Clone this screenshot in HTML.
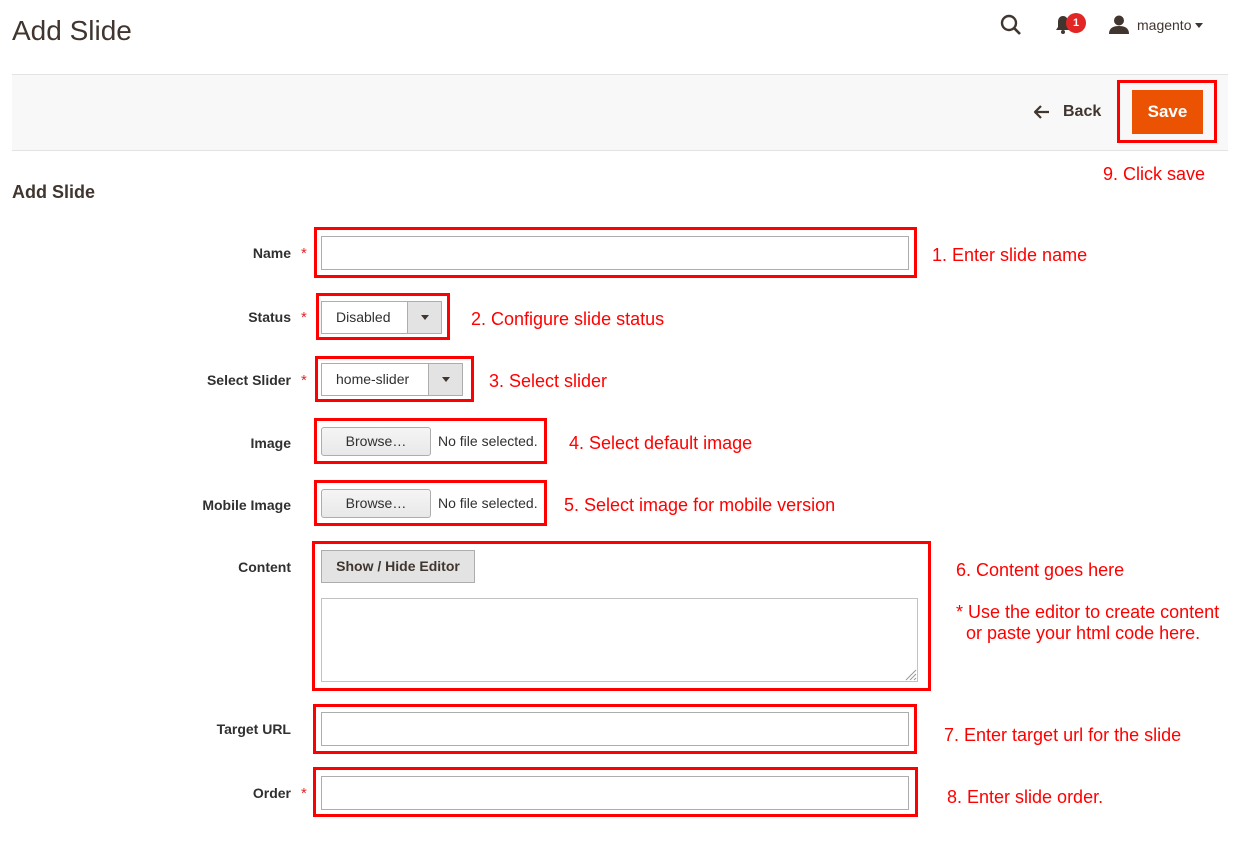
<!DOCTYPE html>
<html><head><meta charset="utf-8"><style>
*{box-sizing:border-box;margin:0;padding:0}
body{width:1240px;height:857px;background:#fff;font-family:"Liberation Sans",sans-serif;position:relative;overflow:hidden;color:#303030}
.a{position:absolute}
.rb{position:absolute;border:3px solid #f00}
.lbl{position:absolute;right:949px;font-size:14px;font-weight:bold;color:#303030;white-space:nowrap;line-height:16px}
.star{position:absolute;left:301px;color:#e22626;font-size:15px;line-height:16px}
.inp{position:absolute;border:1px solid #adadad;background:#fff}
.ann{position:absolute;color:#f00;font-size:18px;white-space:nowrap;line-height:20px}
.sel{position:absolute;border:1px solid #adadad;background:#fff;font-size:14px;color:#303030;line-height:30px;padding-left:14px}
.sel .ar{position:absolute;right:0;top:0;bottom:0;width:34px;background:#e3e3e3;border-left:1px solid #adadad}
.sel .ar:after{content:"";position:absolute;left:13px;top:13px;border-left:4px solid transparent;border-right:4px solid transparent;border-top:5px solid #41362f}
.br{position:absolute;border:1px solid #adadad;border-radius:3px;background:linear-gradient(#f5f5f5,#e8e8e8);font-size:14px;text-align:center;line-height:26px;color:#303030}
.nf{position:absolute;font-size:14px;color:#303030;line-height:16px}
</style></head><body>
<div class="a" style="left:12px;top:15px;font-size:28px;color:#41362f">Add Slide</div>
<svg class="a" style="left:1000px;top:14px" width="22" height="22" viewBox="0 0 22 22"><circle cx="9" cy="9" r="7" fill="none" stroke="#41362f" stroke-width="2.4"/><line x1="14" y1="14" x2="20" y2="20" stroke="#41362f" stroke-width="2.6"/></svg>
<svg class="a" style="left:1055px;top:15px" width="16" height="20" viewBox="0 0 16 20"><path d="M8 1C4.5 1 3 4 3 7v5l-2 3h14l-2-3V7c0-3-1.5-6-5-6z" fill="#41362f"/><circle cx="8" cy="17" r="2" fill="#41362f"/></svg>
<div class="a" style="left:1066px;top:13px;width:20px;height:20px;border-radius:50%;background:#e22626;color:#fff;font-size:11px;font-weight:bold;text-align:center;line-height:20px">1</div>
<svg class="a" style="left:1109px;top:15px" width="20" height="19" viewBox="0 0 20 19"><circle cx="10" cy="5.5" r="5" fill="#41362f"/><path d="M0 19c0-6 4-8 10-8s10 2 10 8z" fill="#41362f"/></svg>
<div class="a" style="left:1137px;top:17px;font-size:14px;color:#41362f">magento</div>
<div class="a" style="left:1195px;top:23px;border-left:4px solid transparent;border-right:4px solid transparent;border-top:5px solid #41362f"></div>
<div class="a" style="left:12px;top:74px;width:1216px;height:77px;background:#f8f8f8;border-top:1px solid #e3e3e3;border-bottom:1px solid #e3e3e3"></div>
<svg class="a" style="left:1034px;top:105px" width="15" height="14" viewBox="0 0 15 14"><path d="M7 1L1 7l6 6M1 7h14" fill="none" stroke="#41362f" stroke-width="2.2"/></svg>
<div class="a" style="left:1063px;top:103px;font-size:16px;color:#41362f;font-weight:bold">Back</div>
<div class="a" style="left:1132px;top:90px;width:71px;height:44px;background:#eb5202;color:#fff;font-size:17px;font-weight:bold;text-align:center;line-height:44px">Save</div>
<div class="rb" style="left:1117px;top:80px;width:100px;height:63px"></div>
<div class="ann" style="left:1103px;top:164px">9. Click save</div>
<div class="a" style="left:12px;top:182px;font-size:18px;font-weight:bold;color:#41362f">Add Slide</div>

<div class="lbl" style="top:245px">Name</div><div class="star" style="top:246px">*</div>
<div class="inp" style="left:321px;top:236px;width:588px;height:34px"></div>
<div class="rb" style="left:314px;top:227px;width:603px;height:51px"></div>
<div class="ann" style="left:932px;top:245px">1. Enter slide name</div>

<div class="lbl" style="top:309px">Status</div><div class="star" style="top:310px">*</div>
<div class="sel" style="left:321px;top:301px;width:121px;height:33px">Disabled<div class="ar"></div></div>
<div class="rb" style="left:316px;top:293px;width:134px;height:47px"></div>
<div class="ann" style="left:471px;top:309px">2. Configure slide status</div>

<div class="lbl" style="top:372px">Select Slider</div><div class="star" style="top:373px">*</div>
<div class="sel" style="left:321px;top:363px;width:142px;height:33px">home-slider<div class="ar"></div></div>
<div class="rb" style="left:315px;top:356px;width:159px;height:46px"></div>
<div class="ann" style="left:489px;top:371px">3. Select slider</div>

<div class="lbl" style="top:435px">Image</div>
<div class="br" style="left:321px;top:427px;width:110px;height:29px">Browse…</div>
<div class="nf" style="left:438px;top:433px">No file selected.</div>
<div class="rb" style="left:314px;top:418px;width:233px;height:46px"></div>
<div class="ann" style="left:569px;top:433px">4. Select default image</div>

<div class="lbl" style="top:497px">Mobile Image</div>
<div class="br" style="left:321px;top:489px;width:110px;height:29px">Browse…</div>
<div class="nf" style="left:438px;top:495px">No file selected.</div>
<div class="rb" style="left:314px;top:480px;width:233px;height:46px"></div>
<div class="ann" style="left:564px;top:495px">5. Select image for mobile version</div>

<div class="lbl" style="top:559px">Content</div>
<div class="a" style="left:321px;top:550px;width:154px;height:33px;background:#e3e3e3;border:1px solid #adadad;font-size:14px;font-weight:bold;color:#41362f;text-align:center;line-height:31px">Show / Hide Editor</div>
<div class="inp" style="left:321px;top:598px;width:597px;height:84px;border-color:#c2c2c2"></div>
<svg class="a" style="left:904px;top:668px" width="13" height="13" viewBox="0 0 13 13"><path d="M12 2L2 12M12 6L6 12M12 10L10 12" stroke="#999" stroke-width="1"/></svg>
<div class="rb" style="left:312px;top:541px;width:619px;height:150px"></div>
<div class="ann" style="left:956px;top:560px">6. Content goes here</div>
<div class="ann" style="left:956px;top:602px">* Use the editor to create content</div>
<div class="ann" style="left:966px;top:623px">or paste your html code here.</div>

<div class="lbl" style="top:721px">Target URL</div>
<div class="inp" style="left:321px;top:712px;width:588px;height:34px"></div>
<div class="rb" style="left:313px;top:704px;width:604px;height:50px"></div>
<div class="ann" style="left:944px;top:725px">7. Enter target url for the slide</div>

<div class="lbl" style="top:785px">Order</div><div class="star" style="top:786px">*</div>
<div class="inp" style="left:321px;top:776px;width:588px;height:34px"></div>
<div class="rb" style="left:313px;top:767px;width:605px;height:50px"></div>
<div class="ann" style="left:947px;top:787px">8. Enter slide order.</div>
</body></html>
